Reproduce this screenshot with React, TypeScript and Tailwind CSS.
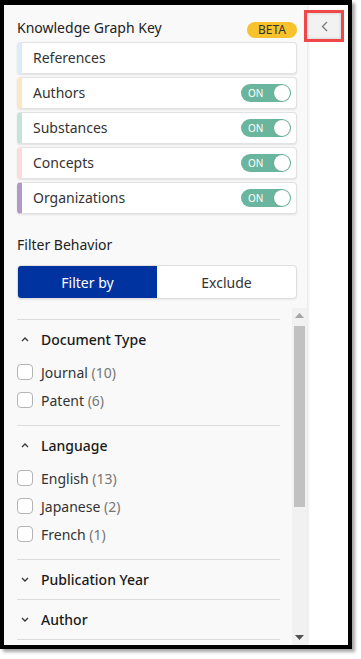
import React from 'react';

const legend = [
    { label: 'References', color: 'border-l-[#d9ecf9]', toggle: false },
    { label: 'Authors', color: 'border-l-[#fbe7c6]', toggle: true },
    { label: 'Substances', color: 'border-l-[#c5e3da]', toggle: true },
    { label: 'Concepts', color: 'border-l-[#fcdcd8]', toggle: true },
    { label: 'Organizations', color: 'border-l-[#b399c4]', toggle: true },
];

const sections = [
    { title: 'Document Type', open: true, items: [['Journal', 10], ['Patent', 6]] },
    { title: 'Language', open: true, items: [['English', 13], ['Japanese', 2], ['French', 1]] },
    { title: 'Publication Year', open: false, items: [] },
    { title: 'Author', open: false, items: [] },
];

const Chevron: React.FC<{ up: boolean }> = ({ up }) => (
    <svg width="8" height="5" viewBox="0 0 8 5" className="shrink-0">
        <path
            d={up ? 'M1 4 L4 1 L7 4' : 'M1 1 L4 4 L7 1'}
            fill="none"
            stroke="#3a3a3a"
            strokeWidth="1.4"
        />
    </svg>
);

const Toggle = () => (
    <div className="flex items-center justify-between w-[50px] h-[18px] rounded-full bg-[#6ab59d] pl-[7px] pr-[1px]">
        <span className="text-[10px] leading-none text-white">ON</span>
        <div className="w-[16px] h-[16px] rounded-full bg-white shadow-[0_0_1px_rgba(0,0,0,0.3)]"></div>
    </div>
);

// classic scrollbar, drawn
const ScrollBar = () => (
    <div className="flex flex-col w-[15px] h-full bg-[#f1f1f1]">
        <div className="flex items-center justify-center h-[15px]">
            <svg width="9" height="5" viewBox="0 0 9 5">
                <path d="M0 5 L4.5 0 L9 5 Z" fill="#a3a3a3" />
            </svg>
        </div>
        <div className="flex-1 px-[2px] pt-[3px]">
            <div className="h-[181px] bg-[#c1c1c1]"></div>
        </div>
        <div className="flex items-center justify-center h-[15px]">
            <svg width="9" height="5" viewBox="0 0 9 5">
                <path d="M0 0 L4.5 5 L9 0 Z" fill="#505050" />
            </svg>
        </div>
    </div>
);

export default function App() {
    return (
        <div className="w-[361px] h-[659px] bg-white font-['Noto_Sans',sans-serif] text-[14px] text-[#333]">
            <div className="flex w-[352px] h-[649px] border-4 border-t-[5px] border-black shadow-[3px_3px_3px_rgba(0,0,0,0.35)]">
                {/* Sidebar */}
                <div className="flex flex-col w-[303px] h-full bg-[#f9f9f9] shadow-[1px_0_3px_rgba(0,0,0,0.12)] z-10">
                    <div className="pl-[13px] pr-[10px] pt-[11px]">
                        <div className="flex items-end justify-between h-[22px]">
                            <span className="leading-[20px] text-[#222]">Knowledge Graph Key</span>
                            <span className="flex items-center justify-center w-[50px] h-[16px] rounded-full bg-[#f8c22c] text-[12px] leading-none text-[#333]">BETA</span>
                        </div>
                        <div className="flex flex-col gap-[3px] mt-[4px]">
                            {legend.map((l) => (
                                <div
                                    key={l.label}
                                    className={`flex items-center justify-between h-[32px] bg-white border border-[#e2e2e2] border-l-[5px] ${l.color} rounded-[4px] shadow-[0_1px_2px_rgba(0,0,0,0.1)] pl-[11px] pr-[5px]`}
                                >
                                    <span className="leading-[20px]">{l.label}</span>
                                    {l.toggle && <Toggle />}
                                </div>
                            ))}
                        </div>
                        <div className="mt-[21px] leading-[20px] text-[#222]">Filter Behavior</div>
                        <div className="flex mt-[10px] h-[34px] rounded-[4px] border border-[#dedede] bg-white overflow-hidden shadow-[0_1px_2px_rgba(0,0,0,0.08)]">
                            <div className="flex flex-1 items-center justify-center bg-[#0033a0] text-white">Filter by</div>
                            <div className="flex flex-1 items-center justify-center text-[#333]">Exclude</div>
                        </div>
                    </div>

                    {/* Filters */}
                    <div className="flex flex-1 min-h-0 mt-[9px]">
                        <div className="flex-1 min-w-0 overflow-hidden pl-[13px] pr-[12px] pt-[11px]">
                            {sections.map((s, i) => (
                                <div
                                    key={s.title}
                                    className={`border-t border-[#dcdcdc] ${i === sections.length - 1 ? 'border-b' : ''}`}
                                >
                                    <div className={`flex items-center gap-[12px] pl-[4px] ${s.open ? 'h-[38px]' : 'h-[39px]'}`}>
                                        <Chevron up={s.open} />
                                        <span className="font-medium text-[#1a1a1a]">{s.title}</span>
                                    </div>
                                    {s.open && (
                                        <div className="pb-[11px]">
                                            {s.items.map(([name, count]) => (
                                                <div key={name} className="flex items-center gap-[8px] h-[28px]">
                                                    <div className="w-[16px] h-[16px] rounded-[4px] border border-[#b4b4b4] bg-white"></div>
                                                    <span>
                                                        {name} <span className="text-[#767676]">({count})</span>
                                                    </span>
                                                </div>
                                            ))}
                                        </div>
                                    )}
                                </div>
                            ))}
                        </div>
                        <ScrollBar />
                    </div>
                </div>

                {/* Collapse tab */}
                <div className="flex-1 bg-white">
                    <button className="flex items-center justify-center w-[40px] h-[32px] mt-[5px] -ml-[3px] border-[3px] border-[#f04848] bg-[#f2f2f2] shadow-[inset_0_0_3px_rgba(0,0,0,0.2)] relative z-20">
                        <svg width="7" height="11" viewBox="0 0 7 11">
                            <path d="M6 1 L1.5 5.5 L6 10" fill="none" stroke="#7a7a7a" strokeWidth="1.3" />
                        </svg>
                    </button>
                </div>
            </div>
        </div>
    );
}
